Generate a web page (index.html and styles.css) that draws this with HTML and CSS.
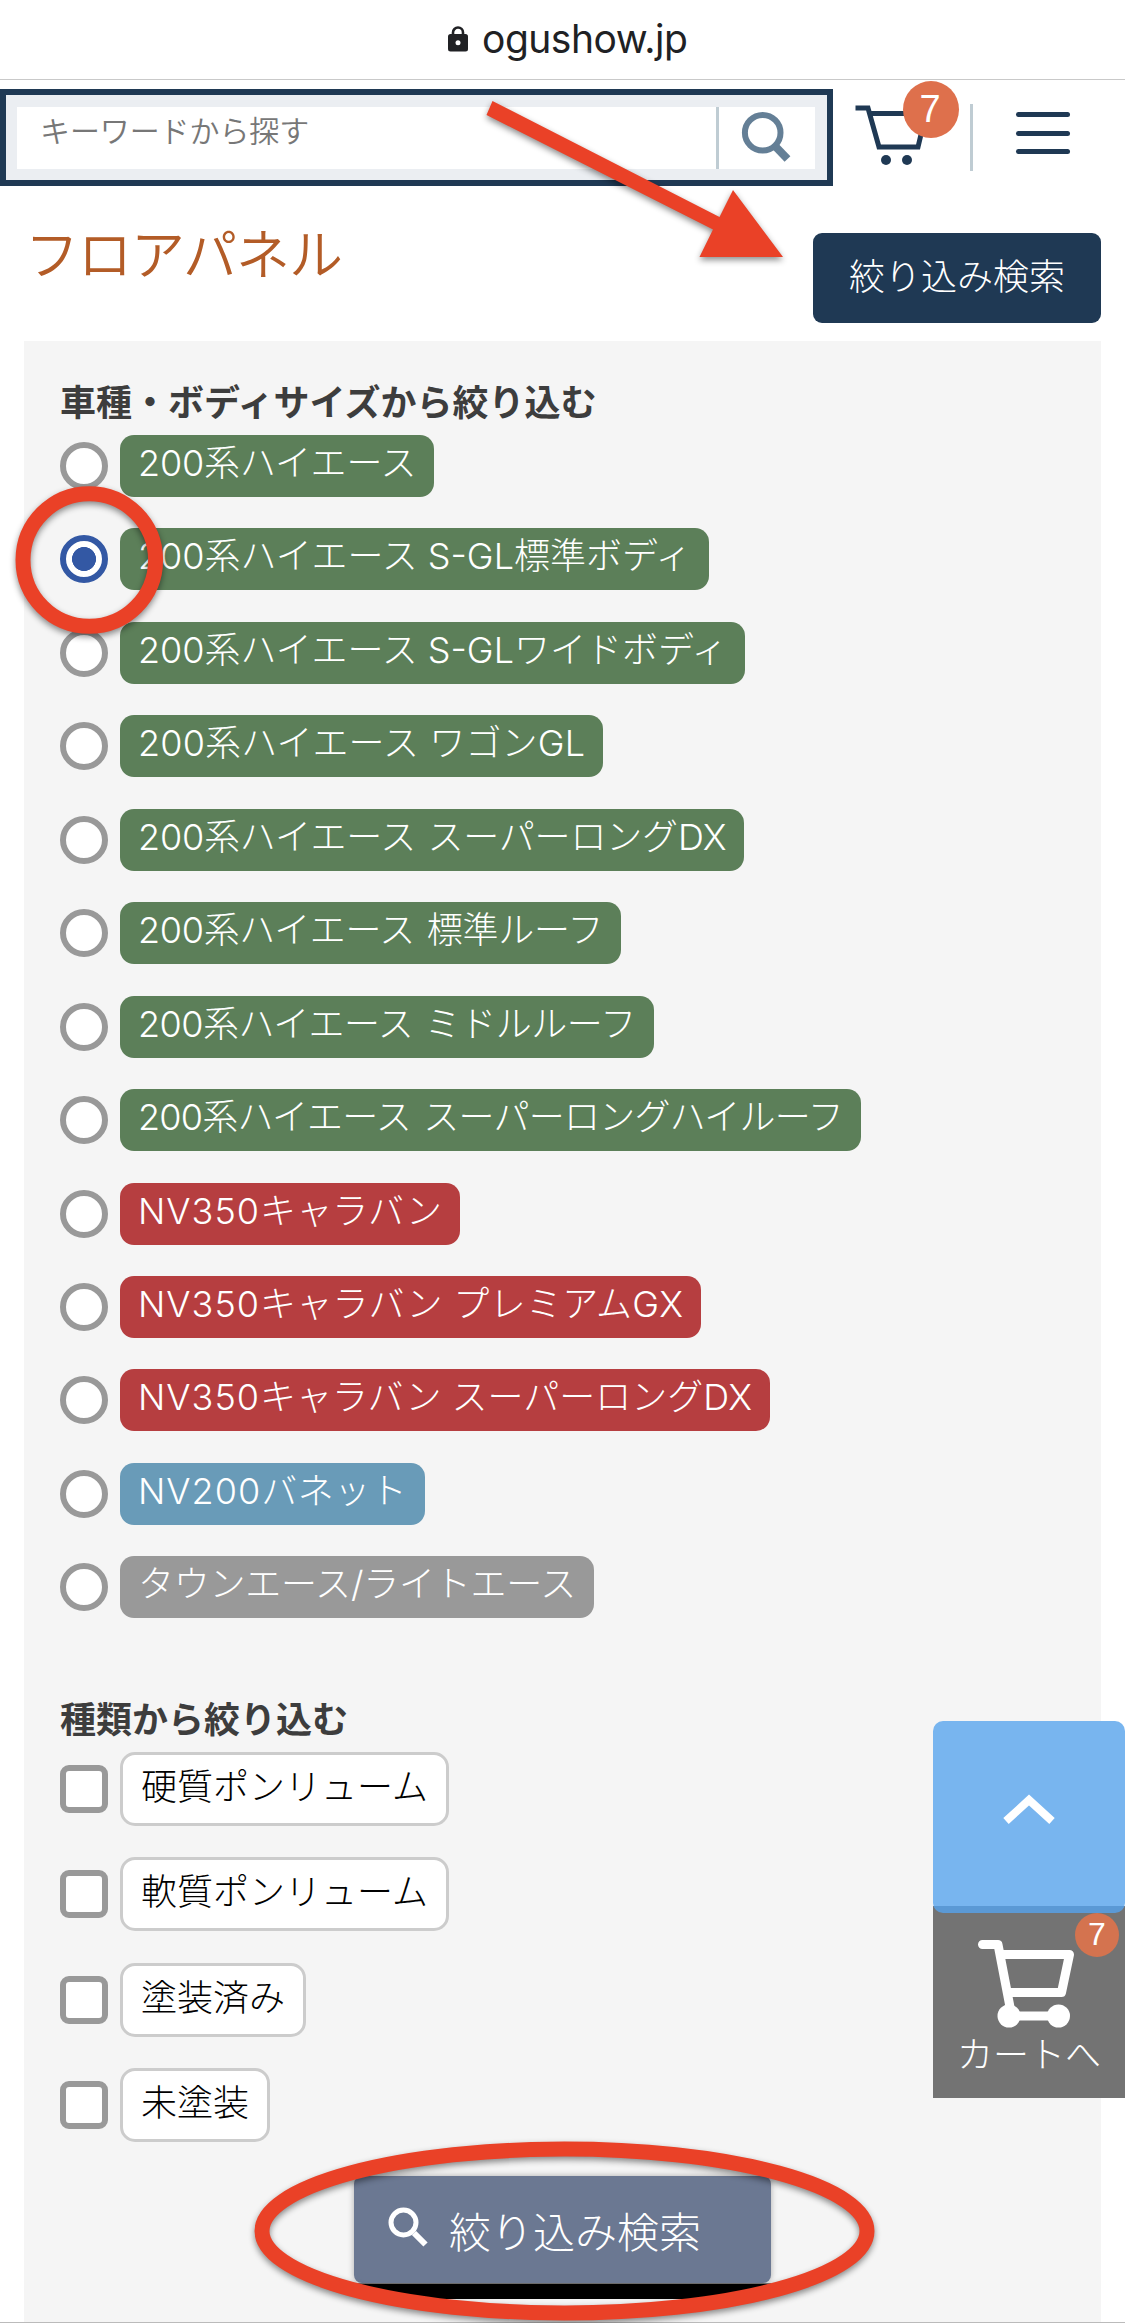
FILE: index.html
```html
<!DOCTYPE html>
<html lang="ja">
<head>
<meta charset="utf-8">
<title>フロアパネル</title>
<link rel="stylesheet" href="styles.css">
</head>
<body>
<div class="page">
  <div class="address">
    <svg class="lock" width="20" height="26" viewBox="0 0 20 26"><path d="M5 9V6.5a5 5 0 0 1 10 0V9" fill="none" stroke="#202124" stroke-width="2.6"/><rect x="0" y="8" width="20" height="17.5" rx="2.5" fill="#202124"/><circle cx="10" cy="16.7" r="2.5" fill="#fff"/></svg>
    <span>ogushow.jp</span>
  </div>
  <header class="header">
    <div class="search">
      <div class="search-input">キーワードから探す</div>
      <div class="search-button">
        <svg width="50" height="52" viewBox="0 0 50 52" fill="none" stroke="#647f96"><circle cx="20.7" cy="20.7" r="17.8" stroke-width="6"/><path d="M33 34L45.500 47" stroke-width="8"/></svg>
      </div>
    </div>
    <div class="cart">
      <svg width="70" height="62" viewBox="0 0 70 62" fill="none" stroke="#1f3954" stroke-width="5"><path d="M0.500 5H13L24 44H63L71 10.500H15"/><circle cx="31" cy="57" r="5" fill="#1f3954" stroke="none"/><circle cx="52" cy="57" r="5" fill="#1f3954" stroke="none"/></svg>
      <span class="cart-count">7</span>
    </div>
    <div class="header-line"></div>
    <div class="menu"><i></i><i></i><i></i></div>
  </header>
  <div class="title-row">
    <h1>フロアパネル</h1>
    <div class="toggle">絞り込み検索</div>
  </div>
  <main class="panel">
    <h2>車種・ボディサイズから絞り込む</h2>
    <ul class="cars">
      <li><i class="radio"></i><span class="tag t1">200系ハイエース</span></li>
      <li><i class="radio checked"></i><span class="tag">200系ハイエース S-GL標準ボディ</span></li>
      <li><i class="radio"></i><span class="tag">200系ハイエース S-GLワイドボディ</span></li>
      <li><i class="radio"></i><span class="tag t4">200系ハイエース ワゴンGL</span></li>
      <li><i class="radio"></i><span class="tag t5">200系ハイエース スーパーロングDX</span></li>
      <li><i class="radio"></i><span class="tag t6">200系ハイエース 標準ルーフ</span></li>
      <li><i class="radio"></i><span class="tag t7">200系ハイエース ミドルルーフ</span></li>
      <li><i class="radio"></i><span class="tag t8">200系ハイエース スーパーロングハイルーフ</span></li>
      <li><i class="radio"></i><span class="tag red t9"><b>NV350</b>キャラバン</span></li>
      <li><i class="radio"></i><span class="tag red t10"><b>NV350</b>キャラバン プレミアムGX</span></li>
      <li><i class="radio"></i><span class="tag red"><b>NV350</b>キャラバン スーパーロングDX</span></li>
      <li><i class="radio"></i><span class="tag blue t12"><b>NV200</b>バネット</span></li>
      <li><i class="radio"></i><span class="tag gray t13">タウンエース/ライトエース</span></li>
    </ul>
    <h2>種類から絞り込む</h2>
    <ul class="kinds">
      <li><i class="check"></i><span class="kind">硬質ポンリューム</span></li>
      <li><i class="check"></i><span class="kind">軟質ポンリューム</span></li>
      <li><i class="check"></i><span class="kind">塗装済み</span></li>
      <li><i class="check"></i><span class="kind">未塗装</span></li>
    </ul>
    <div class="submit-wrap">
      <div class="submit">
        <svg width="42" height="42" viewBox="0 0 42 42" fill="none" stroke="#fff"><circle cx="15.500" cy="15.500" r="12.500" stroke-width="5"/><path d="M26 26L37.500 37.500" stroke-width="6"/></svg>
        <span>絞り込み検索</span>
      </div>
    </div>
  </main>
</div>
<aside class="side">
  <div class="side-top"><svg width="52" height="34" viewBox="0 0 52 34" fill="none" stroke="#fff" stroke-width="8"><path d="M3 28L26 7L49 28"/></svg></div>
  <div class="side-cart">
    <svg width="100" height="92" viewBox="0 0 100 92" fill="none" stroke="#fff" stroke-width="9" stroke-linecap="round" stroke-linejoin="round"><path d="M6.500 7.500H22L34 70M27 17.500H93.500L85.500 55.500H35M33 79H82"/><circle cx="33" cy="79" r="11.500" fill="#fff" stroke="none"/><circle cx="82.500" cy="79" r="11.500" fill="#fff" stroke="none"/></svg>
    <span class="side-label">カートへ</span>
    <span class="side-count">7</span>
  </div>
</aside>
<svg class="marks" width="1125" height="2323" viewBox="0 0 1125 2323">
  <g fill="none" stroke="#ea4127" stroke-width="15"><circle cx="89.300" cy="560" r="66.300"/><ellipse cx="564.500" cy="2231" rx="302.500" ry="82"/></g>
  <path fill="#ea4127" d="M492.500 101L719.500 217L733 190L783 257H699.500L713 229.500L486.500 115Z"/>
</svg>
</body>
</html>
```
FILE: styles.css
```css
* { box-sizing: border-box; margin: 0; padding: 0; }
body {
  position: relative;
  width: 1125px;
  height: 2323px;
  overflow: hidden;
  background: #fff;
  color: #000;
  font: 300 36px/36px Inter, "Noto Sans CJK JP", sans-serif;
  white-space: nowrap;
}
ul { list-style: none; }
svg { display: block; overflow: visible; flex: none; }
.page { height: 2323px; display: flex; flex-direction: column; border-bottom: 1px solid #bbb; }
.address {
  height: 80px;
  display: flex;
  align-items: center;
  padding: 0 0 1px 448px;
  gap: 14px;
  border-bottom: 1px solid #c9c9c9;
  font-size: 39px;
  font-weight: 400;
  letter-spacing: -0.5px;
  color: #202124;
}
.header { height: 106px; display: flex; align-items: flex-start; }
.search {
  display: flex;
  width: 833px;
  height: 97px;
  margin-top: 9px;
  border: 6px solid #1f3954;
  padding: 12px 12px 11px 11px;
  background: #ebeef2;
}
.search-input {
  flex: 1;
  padding: 6px 0 0 23px;
  background: #fff;
  border-right: 3px solid #bfccd3;
  color: #777;
  font-size: 30px;
  font-weight: 350;
  letter-spacing: -0.1px;
}
.search-button { width: 96px; background: #fff; padding: 5px 0 0 23px; }
.cart { position: relative; width: 137px; padding: 23px 0 0 22px; }
.cart-count {
  position: absolute;
  left: 70px;
  top: 1px;
  width: 56px;
  height: 57px;
  padding-right: 2px;
  border-radius: 50%;
  background: #de704c;
  color: #fff;
  font: 38px/57px "Liberation Sans", sans-serif;
  text-align: center;
}
.header-line { width: 3px; height: 67px; margin-top: 24px; background: #bfccd3; }
.menu { width: 54px; margin: 32px 0 0 43px; display: grid; gap: 13.500px; }
.menu i { height: 5px; border-radius: 3px; background: #1f3954; }
.title-row { height: 155px; display: flex; justify-content: space-between; padding: 47px 24px 0 25px; }
h1 { font-size: 54px; line-height: 45px; font-weight: 350; color: #b35c27; letter-spacing: -1px; }
.toggle {
  width: 288px;
  height: 90px;
  border-radius: 9px;
  background: #1f3954;
  color: #fff;
  text-align: center;
  line-height: 89px;
}
.panel { flex: 1; margin: 0 24px; padding: 44px 36px 0; background: #f5f5f5; }
h2 { font-size: 36px; font-weight: 700; line-height: 36px; color: #3d3d3d; }
.cars { padding-top: 14px; margin-bottom: 84px; display: grid; gap: 31.450px; }
.kinds { padding-top: 13.500px; display: grid; gap: 31.400px; }
li { display: flex; align-items: center; gap: 12px; }
.radio, .check { width: 48px; height: 48px; border: 6px solid #999; background: #fff; }
.radio { border-radius: 50%; }
.check { border-radius: 9px; }
.checked { border-color: #3358a4; background: radial-gradient(circle, #3358a4 11.700px, #fff 12.300px); }
.tag {
  height: 62px;
  padding: 0 18px;
  border-radius: 14px;
  background: #5c7f59;
  color: #fff;
  line-height: 57px;
}
.tag b { font-weight: inherit; letter-spacing: 1px; }
.t1 { letter-spacing: -.15px; }
.t4 { letter-spacing: .15px; }
.t5 { letter-spacing: -.18px; word-spacing: 1.500px; }
.t6 { letter-spacing: -.3px; word-spacing: 2px; }
.t7 { letter-spacing: -.5px; word-spacing: 2px; }
.t8 { letter-spacing: -.75px; word-spacing: 3px; }
.t9 { letter-spacing: .15px; }
.t10 { letter-spacing: .3px; }
.t12 { letter-spacing: .5px; }
.t13 { letter-spacing: -.22px; }
.red { background: #b63e40; }
.blue { background: #699bb8; }
.gray { background: #999; }
.kind {
  height: 74px;
  padding: 0 18px;
  border: 3px solid #ccc;
  border-radius: 15px;
  background: #fff;
  line-height: 64px;
}
.submit-wrap {
  width: 417px;
  height: 123px;
  margin: 34px 0 0 294px;
  border-radius: 8px 8px 12px 12px;
  background: linear-gradient(#f5f5f5 107px, #000 108px);
}
.submit {
  height: 107px;
  display: flex;
  padding: 31px 0 0 34px;
  gap: 19px;
  border-radius: 8px;
  background: #6b7892;
  box-shadow: 0 0 6px rgba(0, 0, 0, .3);
  color: #fff;
  font-size: 42px;
  line-height: 52px;
}
.side { position: absolute; right: 0; top: 1721px; width: 192px; color: #fff; }
.side-top {
  position: relative;
  height: 192px;
  border-radius: 10px;
  display: grid;
  place-items: center;
  padding-bottom: 15px;
  background: linear-gradient(#78b5ef 185px, #5b99d5 185px);
  z-index: 1;
}
.side-cart { position: relative; height: 192px; margin-top: -7px; padding: 31px 0 0 43px; background: #737373; }
.side-label { display: block; margin: 7px 0 0 -19px; line-height: 38px; }
.side-count {
  position: absolute;
  right: 6px;
  top: 7px;
  width: 44px;
  height: 44px;
  border-radius: 50%;
  background: #d4734f;
  font: 32px/43px "Liberation Sans", sans-serif;
  text-align: center;
}
.marks { position: absolute; left: 0; top: 0; z-index: 2; filter: drop-shadow(0 3px 3px rgba(0, 0, 0, .45)); }
```
